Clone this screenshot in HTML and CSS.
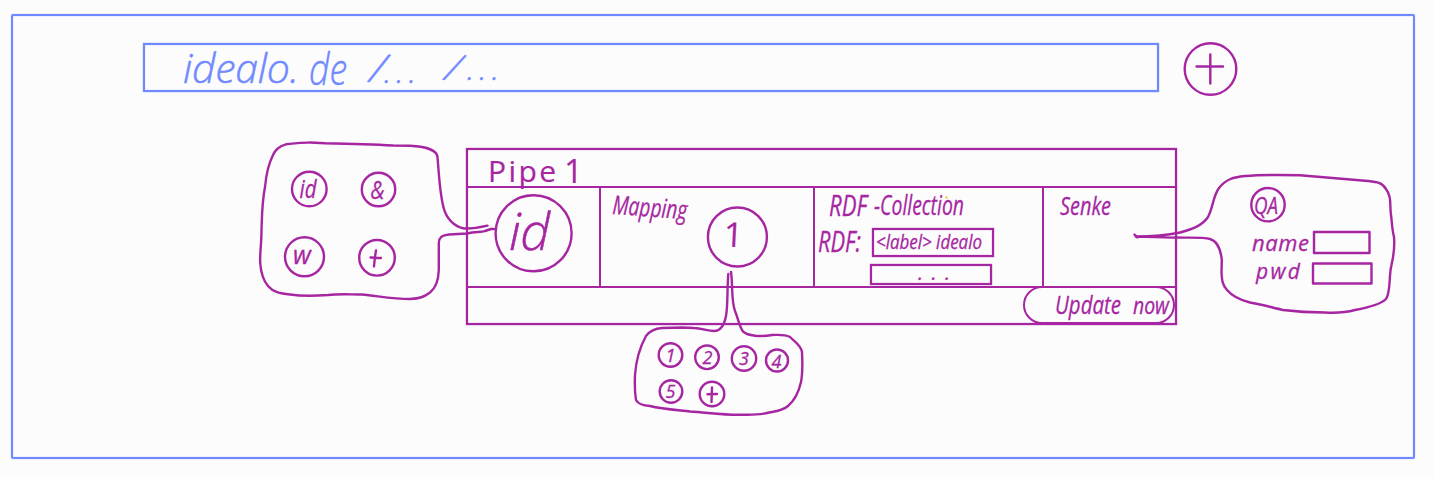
FILE: index.html
```html
<!DOCTYPE html>
<html lang="en">
<head>
<meta charset="utf-8">
<title>Pipe 1</title>
<link rel="stylesheet" href="styles.css">
</head>
<body>
<main class="board">
  <section class="frame">
    <header class="topbar">
      <div class="address">
        <svg class="ink blue" width="380" height="45" viewBox="145 45 380 45">
          <text class="light" x="183" y="83" font-size="41" textLength="116">idealo.</text>
          <text class="light" x="309" y="84.500" font-size="45" textLength="38" lengthAdjust="spacingAndGlyphs">de</text>
          <text class="light" x="369" y="82" font-size="42" transform="rotate(9 369 82)">/</text>
          <text class="light" x="384" y="83" font-size="32" textLength="32">...</text>
          <text class="light" x="444" y="80" font-size="40" transform="rotate(13 444 80)">/</text>
          <text class="light" x="467" y="80" font-size="32" textLength="32">...</text>
        </svg>
      </div>
      <svg class="ink add" width="54" height="54" viewBox="1184 42 54 54">
        <circle cx="1210.5" cy="69" r="25.8"/>
        <path d="M1210.3 54.5V83.5M1196.5 66.5H1223"/>
      </svg>
    </header>

    <article class="pipe">
      <div class="pipe-head">
        <svg class="ink" width="140" height="36" viewBox="468 150 140 36">
          <text class="up" x="488" y="182" font-size="30" textLength="68">Pipe</text>
          <text class="up" x="564" y="182.500" font-size="33">1</text>
        </svg>
      </div>
      <div class="pipe-body">
        <div class="cell source">
          <svg class="ink" width="80" height="80" viewBox="494 193 80 80">
            <circle cx="533.6" cy="233.300" r="38"/>
            <text class="light" x="509" y="250" font-size="52" textLength="41">id</text>
          </svg>
        </div>
        <div class="cell mapping">
          <svg class="ink" width="84" height="60" viewBox="601 188 84 60">
            <text x="612" y="214" font-size="26" textLength="75" lengthAdjust="spacingAndGlyphs" transform="rotate(4 612 214)">Mapping</text>
          </svg>
          <svg class="ink mark" width="64" height="64" viewBox="706 205 64 64">
            <circle cx="737.4" cy="237" r="29.5"/>
            <text class="up" x="723.500" y="247" font-size="34" transform="rotate(3 737 237)">1</text>
          </svg>
        </div>
        <div class="cell collection">
          <svg class="ink" width="227" height="40" viewBox="815 188 227 40">
            <text x="829" y="216" font-size="29" textLength="38" lengthAdjust="spacingAndGlyphs">RDF</text>
            <text x="874" y="215" font-size="27" textLength="90" lengthAdjust="spacingAndGlyphs">-Collection</text>
            <circle class="spot" cx="946.500" cy="197.500" r="1.200"/>
          </svg>
          <div class="field-row">
            <svg class="ink" width="57" height="29" viewBox="815 228 57 29">
              <text x="818" y="252" font-size="30" textLength="43" lengthAdjust="spacingAndGlyphs">RDF:</text>
            </svg>
            <div class="field">
              <svg class="ink" width="118" height="25" viewBox="874 230 118 25">
                <text class="bold" x="876" y="249" font-size="20" textLength="106" lengthAdjust="spacingAndGlyphs">&lt;label&gt; idealo</text>
              </svg>
            </div>
          </div>
          <div class="field more">
            <svg class="ink" width="118" height="17" viewBox="872 266 118 17">
              <text x="918" y="280" font-size="20" textLength="32">...</text>
            </svg>
          </div>
        </div>
        <div class="cell sink">
          <svg class="ink" width="80" height="40" viewBox="1044 188 80 40">
            <text x="1060" y="215" font-size="25" textLength="51" lengthAdjust="spacingAndGlyphs">Senke</text>
          </svg>
        </div>
      </div>
      <footer class="pipe-foot">
        <button class="update" type="button">
          <svg class="ink" width="148" height="33" viewBox="1024 289 148 33">
            <text x="1054" y="314" font-size="25" textLength="66" lengthAdjust="spacingAndGlyphs">Update</text>
            <text x="1132" y="314" font-size="23" textLength="36" lengthAdjust="spacingAndGlyphs">now</text>
          </svg>
        </button>
      </footer>
    </article>
  </section>

  <svg class="callout sources ink" width="250" height="170" viewBox="250 135 250 170">
    <path d="M487.500 225.700C480 227.500 473 228.500 466 228.500C458 228.500 449 222 445 212C440 200 439 175 437.500 157C437 150 425 146.500 410 145.800L393 145.500C370 144 345 143.500 325 143.200L310 142.500C302 142.800 293 143 286 144.300C280 146 275 150 273 155C268 165 266 176 265 187C262 202 262 215 261.500 230C261.500 245 259.500 254 260.300 264C261 273 263 280 268 286C273 292 280 293.500 290 294.500C300 296 315 296 328 295C340 293.500 350 294.500 362 294.500C378 296 393 299 410 299C420 298.500 424 297 430 292.500C437 287 438.500 279 438.800 270V243C438.800 237 442 235 449 234.500L467 233.500C476 231.500 481 232.500 485 231L491 229L496 229"/>
    <circle cx="309.300" cy="189" r="17.300"/>
    <text x="299.500" y="197.500" font-size="25" textLength="17" lengthAdjust="spacingAndGlyphs">id</text>
    <circle cx="378.500" cy="189.500" r="16.700"/>
    <text x="370.500" y="198.500" font-size="26" textLength="14" lengthAdjust="spacingAndGlyphs">&amp;</text>
    <circle cx="304.500" cy="256.800" r="19.500"/>
    <text x="293" y="263.500" font-size="25">w</text>
    <circle cx="377" cy="257.800" r="17.800"/>
    <path d="M376 250.500C375 256 374.500 260 374 266.500M370.500 257.500L381 258"/>
  </svg>

  <svg class="callout steps ink" width="180" height="150" viewBox="628 268 180 150">
    <path d="M728.300 274C727 290 728 305 726 316C724 326 720 331 714 331C707 331 702 328 694 328L682 327.500L662 328C655 328.500 649 332 646 336C640 347 636 360 635 375C634.500 386 635 394 636 400C638 404 642 405.500 650 406C662 409 677 410 690 411.500C707 412.500 722 415 740 414.800C752 414.500 762 415 769 412.500C776 411 782 411 788 406C795 400 799 391 801 382C803 372 802.500 362 802 352C801 345 795 342 790 337C784 334 778 335 772 335C760 337 748 336 743 331.500C739 326 738 318 735 311C731 300 733 286 731 272"/>
    <g class="small">
      <circle cx="670.500" cy="355" r="11.800"/><text x="665.500" y="361.500" font-size="18">1</text>
      <circle cx="707" cy="357.300" r="11.800"/><text x="702.500" y="363.500" font-size="18">2</text>
      <circle cx="744" cy="358.500" r="12.200"/><text x="739" y="365" font-size="18">3</text>
      <circle cx="777" cy="360.500" r="11"/><text x="771.500" y="367.500" font-size="18">4</text>
      <circle cx="671" cy="391.500" r="11.300"/><text x="665.500" y="398" font-size="18">5</text>
      <circle cx="712" cy="394" r="12.300"/><path d="M712 387.500L711.500 402M707.500 394.200L717 394"/>
    </g>
  </svg>

  <svg class="callout login ink" width="270" height="150" viewBox="1130 170 270 150">
    <path d="M1134.500 234.500L1137.500 237.500L1135.500 236.500C1152 236.500 1166 235.500 1180 232.500C1192 229 1202 226 1208 217C1213 208 1213 196 1219 188C1226 179 1234 177 1245 176C1262 174.500 1281 174.800 1300 175.200L1368 181C1377 182 1382 182.500 1386 189C1392 197 1389.500 205 1391 215C1392 222 1392 229 1394 237C1395 247 1393.500 256 1391.500 265C1388.500 277 1391 292 1386 299C1380 305 1366 308 1355 310C1344 313 1335 313 1325 312.500C1310 312.500 1295 311.500 1283 310C1272 307.500 1260 304 1250 302.500C1240 300 1232 296 1227 290C1222 284 1222 280 1221.500 273L1221.800 260C1220.500 248 1217 241 1210 239C1203 237 1188 238 1176 237.500C1163 238 1152 236.500 1137 236.500"/>
    <circle cx="1268" cy="204.700" r="16.700"/>
    <text x="1254" y="213.500" font-size="24" textLength="24" lengthAdjust="spacingAndGlyphs">QA</text>
    <text x="1252" y="251" font-size="22" textLength="57">name</text>
    <rect x="1314" y="232" width="55.500" height="21"/>
    <text x="1256" y="279" font-size="21" textLength="44">pwd</text>
    <rect x="1313" y="263.500" width="58.500" height="20"/>
  </svg>
</main>
</body>
</html>
```
FILE: styles.css
```css
:root { --blue: #7089ff; --violet: #a626a2; --paper: #fcfcfc; }
* { box-sizing: border-box; }
body { margin: 0; background: var(--paper); }
.board { position: relative; width: 1433px; height: 479px; padding: 14px 0 0 11px; overflow: hidden; }
.frame { width: 1404px; height: 445px; border: 2px solid var(--blue); border-radius: 2px; box-shadow: 0 0 1px var(--blue), inset 0 0 1px var(--blue); }
.ink { display: block; overflow: visible; flex: none; fill: none; stroke: var(--violet); stroke-width: 2.4; stroke-linecap: round; stroke-linejoin: round; }
.ink text { fill: var(--violet); stroke: var(--violet); stroke-width: .3; font-family: "Open Sans", "Noto Sans", sans-serif; font-style: italic; font-weight: 400; }
.ink .light { font-weight: 300; stroke-width: .5; }
.ink .bold { font-weight: 500; }
.ink .up { font-style: normal; stroke-width: .2; }
.ink .spot { fill: #ffc34d; stroke: none; }
.blue .light { fill: var(--blue); stroke: var(--blue); }
.topbar { display: flex; align-items: flex-start; height: 80px; padding: 27px 0 0 130px; }
.address { width: 1016px; height: 49px; border: 2px solid var(--blue); box-shadow: 0 0 1px var(--blue), inset 0 0 1px var(--blue); }
.add { margin: -1px 0 0 25px; }
.pipe { width: 711px; height: 177px; margin: 52px 0 0 453px; border: 2px solid var(--violet); box-shadow: 0 0 1px var(--violet), inset 0 0 1px var(--violet); }
.pipe-head { height: 38px; border-bottom: 2px solid var(--violet); }
.pipe-body { display: grid; grid-template-columns: 133px 214px 229px 1fr; height: 100px; border-bottom: 2px solid var(--violet); }
.cell { border-right: 2px solid var(--violet); }
.source { padding: 5px 0 0 26px; }
.mapping { display: flex; }
.mark { margin: 17px 0 0 21px; }
.sink { border-right: 0; }
.field-row { display: flex; }
.field { width: 122px; height: 29px; border: 2px solid var(--violet); box-shadow: 0 0 1px var(--violet), inset 0 0 1px var(--violet); }
.more { height: 21px; margin: 7px 0 0 55px; }
.pipe-foot { display: flex; justify-content: flex-end; height: 35px; }
.update { width: 152px; height: 38px; margin: -2px 0 0; padding: 0; border: 2px solid var(--violet); border-radius: 19px; background: transparent; }
.callout { position: absolute; }
.sources { left: 250px; top: 135px; }
.steps { left: 628px; top: 268px; }
.login { left: 1130px; top: 170px; }
```
